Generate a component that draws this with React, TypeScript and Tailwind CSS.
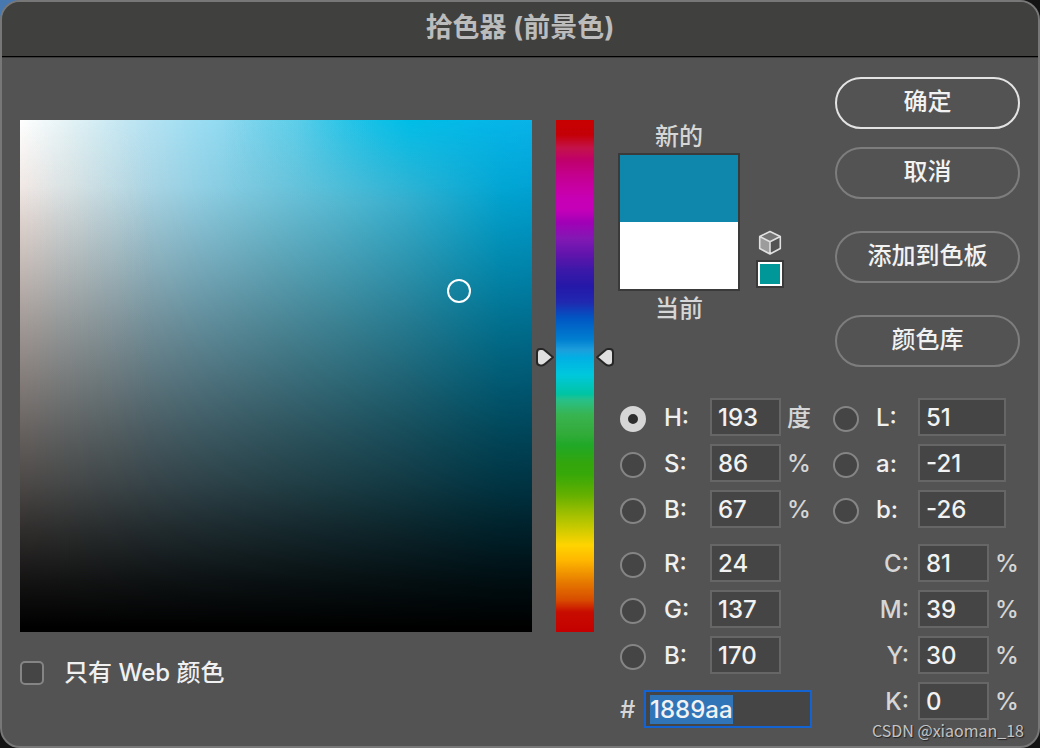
import { useEffect, useRef, useState } from "react";
import clsx from "clsx";

type Channel = {
  id: string;
  label: string;
  name: string;
  value: string;
  unit?: string;
};

const HSB: Channel[] = [
  { id: "hsb-h", label: "H:", name: "色相", value: "193", unit: "度" },
  { id: "hsb-s", label: "S:", name: "饱和度", value: "86", unit: "%" },
  { id: "hsb-b", label: "B:", name: "亮度", value: "67", unit: "%" },
];

const RGB: Channel[] = [
  { id: "rgb-r", label: "R:", name: "红", value: "24" },
  { id: "rgb-g", label: "G:", name: "绿", value: "137" },
  { id: "rgb-b", label: "B:", name: "蓝", value: "170" },
];

const LAB: Channel[] = [
  { id: "lab-l", label: "L:", name: "明度", value: "51" },
  { id: "lab-a", label: "a:", name: "a", value: "-21" },
  { id: "lab-b", label: "b:", name: "b", value: "-26" },
];

const CMYK: Channel[] = [
  { id: "cmyk-c", label: "C:", name: "青", value: "81", unit: "%" },
  { id: "cmyk-m", label: "M:", name: "洋红", value: "39", unit: "%" },
  { id: "cmyk-y", label: "Y:", name: "黄", value: "30", unit: "%" },
  { id: "cmyk-k", label: "K:", name: "黑", value: "0", unit: "%" },
];

const inputClass =
  "h-[38px] border-2 border-[#666] bg-[#454545] px-1.5 pt-px leading-[30px] text-[#f2f2f2] outline-none";

function ColorField({ saturation, brightness }: { saturation: number; brightness: number }) {
  return (
    <div className="relative h-[512px] bg-[linear-gradient(to_right,#fff_0%,#e2f2f5_10%,#b8e3f2_24%,#98dcf2_36%,#78d2ea_50%,#5acae6_63%,#3cc0e2_75%,#16b6e0_87%,#02b0e0_94%,#00ace0_100%)]">
      {/* pure cyan along the top right, warm greys down the left edge */}
      <div className="absolute inset-0 bg-[linear-gradient(to_right,transparent_40%,rgba(40,200,235,0.25)_54%,rgba(10,192,232,0.7)_66%,#00bde6_76%,#08b2e8_100%)] [mask-image:linear-gradient(to_bottom,#000,transparent_16%)]" />
      <div className="absolute inset-0 bg-[linear-gradient(to_right,rgba(255,240,234,0.9),rgba(238,234,232,0.5)_7%,rgba(225,228,230,0.25)_14%,transparent_26%)] [mask-image:linear-gradient(to_bottom,transparent,#000_20%)]" />
      <div className="absolute inset-0 bg-[linear-gradient(to_bottom,rgba(0,0,0,0)_0%,rgba(0,0,0,0.06)_13%,rgba(0,0,0,0.25)_30%,rgba(0,0,0,0.37)_40%,rgba(0,0,0,0.48)_50%,rgba(0,0,0,0.6)_61%,rgba(0,0,0,0.7)_71%,rgba(0,0,0,0.81)_80%,rgba(0,0,0,0.92)_90%,#000_99%)]" />
      <span
        className="absolute size-6 -translate-x-1/2 -translate-y-1/2 rounded-full border-2 border-white"
        style={{ left: `${saturation}%`, top: `${100 - brightness}%` }}
      />
    </div>
  );
}

function HueSlider({ hue, onChange }: { hue: number; onChange: (hue: number) => void }) {
  return (
    <div className="relative h-[512px] w-[38px] shrink-0 bg-[linear-gradient(to_bottom,#c80000_0px,#c40008_15px,#c4124a_28px,#c0006a_40px,#c4008e_55px,#c800b4_78px,#c400b8_90px,#a200b6_102px,#8418b4_118px,#6014ac_135px,#3c18a8_150px,#2418a8_167px,#2028b0_182px,#0056c4_198px,#0080d0_220px,#1c9edc_230px,#00b0e4_238px,#00c8dc_255px,#00c4a4_274px,#28c088_280px,#38b450_295px,#34ac3c_312px,#20a828_325px,#32a60e_342px,#38a808_355px,#64b000_375px,#94bc00_390px,#c0c800_405px,#ffd400_425px,#ffb800_440px,#e88000_460px,#d84c00_480px,#c80c00_492px,#c40000_512px)]">
      <input
        type="range"
        aria-label="色相"
        min={0}
        max={360}
        value={hue}
        onChange={(e) => onChange(Number(e.target.value))}
        className="absolute inset-0 h-full w-full cursor-pointer opacity-0 [direction:rtl] [writing-mode:vertical-lr]"
      />
      <div
        className="pointer-events-none absolute -left-5 flex w-[78px] -translate-y-1/2 justify-between"
        style={{ top: `${100 - (hue / 360) * 100}%` }}
      >
        <Pointer />
        <Pointer flipped />
      </div>
    </div>
  );
}

function Pointer({ flipped = false }: { flipped?: boolean }) {
  return (
    <svg viewBox="0 0 18 20" className={clsx("h-5 w-[18px]", flipped && "-scale-x-100")}>
      <path
        d="M4.5 1 H6 Q7.5 1 9 2.4 L17 9.2 L9 16 Q7.5 17.4 6 17.4 H4.5 Q1 17.4 1 14 V4.4 Q1 1 4.5 1 Z"
        fill="#e0e0e0"
        stroke="#262626"
        strokeWidth="2"
        strokeLinejoin="round"
      />
    </svg>
  );
}

function CubeIcon() {
  return (
    <svg viewBox="0 0 24 26" className="h-[26px] w-6" strokeLinejoin="round">
      <path d="M12 1.5 L22.3 6.5 L12 11.8 L1.7 6.5 Z" fill="#757575" />
      <path d="M1.7 6.5 L12 11.8 V24 L1.7 18.5 Z" fill="#9c9c9c" />
      <path d="M22.3 6.5 L12 11.8 V24 L22.3 18.5 Z" fill="#535353" />
      <path
        d="M12 1.5 L22.3 6.5 V18.5 L12 24 L1.7 18.5 V6.5 Z M1.7 6.5 L12 11.8 L22.3 6.5 M12 11.8 V24"
        fill="none"
        stroke="#e0e0e0"
        strokeWidth="1.6"
      />
    </svg>
  );
}

function Swatches() {
  return (
    <div className="flex pt-11">
      <div className="flex w-[122px] flex-col items-center text-[#d6d6d6]">
        <span className="leading-8">新的</span>
        <div className="w-full border-2 border-[#3a3a3a]">
          <div className="h-[67px] bg-[#0f86ab]" />
          <div className="h-[67px] bg-white" />
        </div>
        <span className="mt-0.5 leading-8">当前</span>
      </div>
      <div className="ml-4 flex flex-col items-center gap-1 pt-[109px]">
        <button type="button" aria-label="非 Web 安全颜色">
          <CubeIcon />
        </button>
        <button
          type="button"
          aria-label="选择 Web 安全颜色"
          className="size-7 border-2 border-[#3a3a3a] bg-white p-0.5"
        >
          <span className="block size-5 bg-[#009799]" />
        </button>
      </div>
    </div>
  );
}

function DialogButton({ children, primary = false }: { children: string; primary?: boolean }) {
  return (
    <button
      type="button"
      className={clsx(
        "h-[52px] w-full rounded-full border-2 pb-0.5 text-[#f2f2f2]",
        primary ? "border-[#e3e3e3]" : "border-[#7d7d7d]",
      )}
    >
      {children}
    </button>
  );
}

type RowProps = {
  channel: Channel;
  active: string;
  onSelect: (id: string) => void;
  wide?: boolean;
};

function RadioRow({ channel, active, onSelect, wide = false }: RowProps) {
  return (
    <div className="flex items-center">
      <input
        type="radio"
        name="channel"
        aria-label={channel.name}
        checked={active === channel.id}
        onChange={() => onSelect(channel.id)}
        className="mt-1 size-[26px] appearance-none rounded-full border-2 border-[#858585] bg-[#454545] checked:border-8 checked:border-[#d6d6d6] checked:bg-[#2e2e2e]"
      />
      <label
        htmlFor={channel.id}
        className={clsx("pt-px text-[#f0f0f0]", wide ? "w-[59px] pl-[17px]" : "w-16 pl-[18px]")}
      >
        {channel.label}
      </label>
      <input
        id={channel.id}
        defaultValue={channel.value}
        className={clsx(inputClass, wide ? "w-[88px]" : "w-[71px]")}
      />
      {channel.unit && <Unit>{channel.unit}</Unit>}
    </div>
  );
}

function Unit({ children }: { children?: string }) {
  return <span className="pt-px pl-1.5 leading-[37px] text-[#d6d6d6]">{children}</span>;
}

function InkRow({ channel }: { channel: Channel }) {
  return (
    <div className="flex items-center text-[#d6d6d6]">
      <label htmlFor={channel.id} className="w-[85px] pt-px pr-[9px] text-right">
        {channel.label}
      </label>
      <input id={channel.id} defaultValue={channel.value} className={clsx(inputClass, "w-[71px]")} />
      <Unit>{channel.unit}</Unit>
    </div>
  );
}

export default function App() {
  const [hue, setHue] = useState(193);
  const [active, setActive] = useState("hsb-h");
  const [webOnly, setWebOnly] = useState(false);
  const hexRef = useRef<HTMLInputElement>(null);

  // The hex value is focused and selected as soon as the dialog opens
  useEffect(() => {
    hexRef.current?.focus();
    hexRef.current?.select();
  }, []);

  return (
    <div className="flex min-h-screen bg-[linear-gradient(135deg,#4878b0_0px,#4878b0_16px,#141414_60px)] font-[Inter,'Noto_Sans_CJK_SC',sans-serif] text-2xl font-medium">
      <div
        role="dialog"
        aria-labelledby="dialog-title"
        className="relative flex w-full flex-col overflow-hidden rounded-[20px] border-2 border-[#777] bg-[#535353]"
      >
        <header className="flex h-[55px] items-center justify-center border-b border-black bg-[#40403e] pb-0.5">
          <h1 id="dialog-title" className="text-[27px] font-bold text-[#bcbcbc]">
            拾色器 (前景色)
          </h1>
        </header>

        <main className="flex flex-1 border-t border-[#3c3a3a] px-[18px]">
          <div className="min-w-0 flex-1 pt-[62px]">
            <ColorField saturation={85.7} brightness={66.6} />
            <label className="mt-[23px] flex items-center gap-5 leading-9 text-[#f0f0f0]">
              <input
                type="checkbox"
                checked={webOnly}
                onChange={(e) => setWebOnly(e.target.checked)}
                className="size-6 appearance-none rounded-[5px] border-2 border-[#858585] bg-[#454545] checked:bg-[#d6d6d6]"
              />
              只有 Web 颜色
            </label>
          </div>

          <div className="px-6 pt-[62px]">
            <HueSlider hue={hue} onChange={setHue} />
          </div>

          <div className="w-[402px] shrink-0 pt-[19px]">
            <div className="flex items-start justify-between">
              <Swatches />
              <div className="flex w-[185px] flex-col gap-8">
                <div className="flex flex-col gap-[18px]">
                  <DialogButton primary>确定</DialogButton>
                  <DialogButton>取消</DialogButton>
                </div>
                <DialogButton>添加到色板</DialogButton>
                <DialogButton>颜色库</DialogButton>
              </div>
            </div>

            <div className="mt-[31px] flex leading-[37px]">
              <div className="flex w-[215px] flex-col gap-4">
                <div className="flex flex-col gap-2 pl-0.5">
                  {HSB.map((c) => (
                    <RadioRow key={c.id} channel={c} active={active} onSelect={setActive} />
                  ))}
                </div>
                <div className="flex flex-col gap-2 pl-0.5">
                  {RGB.map((c) => (
                    <RadioRow key={c.id} channel={c} active={active} onSelect={setActive} />
                  ))}
                </div>
                <div className="flex pl-0.5">
                  <label htmlFor="hex" className="w-6 pt-px text-[#d6d6d6]">
                    #
                  </label>
                  <input
                    id="hex"
                    ref={hexRef}
                    defaultValue="1889aa"
                    className="h-[38px] w-[168px] border-2 border-[#1463d2] bg-[#454545] px-1 pt-px leading-[30px] text-[#f2f2f2] outline-none selection:bg-[#3075b8] selection:text-[#f2f2f2]"
                  />
                </div>
              </div>

              <div className="flex flex-col gap-4">
                <div className="flex flex-col gap-2">
                  {LAB.map((c) => (
                    <RadioRow key={c.id} channel={c} active={active} onSelect={setActive} wide />
                  ))}
                </div>
                <div className="flex flex-col gap-2">
                  {CMYK.map((c) => (
                    <InkRow key={c.id} channel={c} />
                  ))}
                </div>
              </div>
            </div>
          </div>
        </main>

        <span className="absolute right-3.5 bottom-1 font-['Noto_Sans_CJK_SC',sans-serif] text-base leading-6 font-normal text-[#c4c4c4] [text-shadow:1px_1px_1px_#222]">
          CSDN @xiaoman_18
        </span>
      </div>
    </div>
  );
}
